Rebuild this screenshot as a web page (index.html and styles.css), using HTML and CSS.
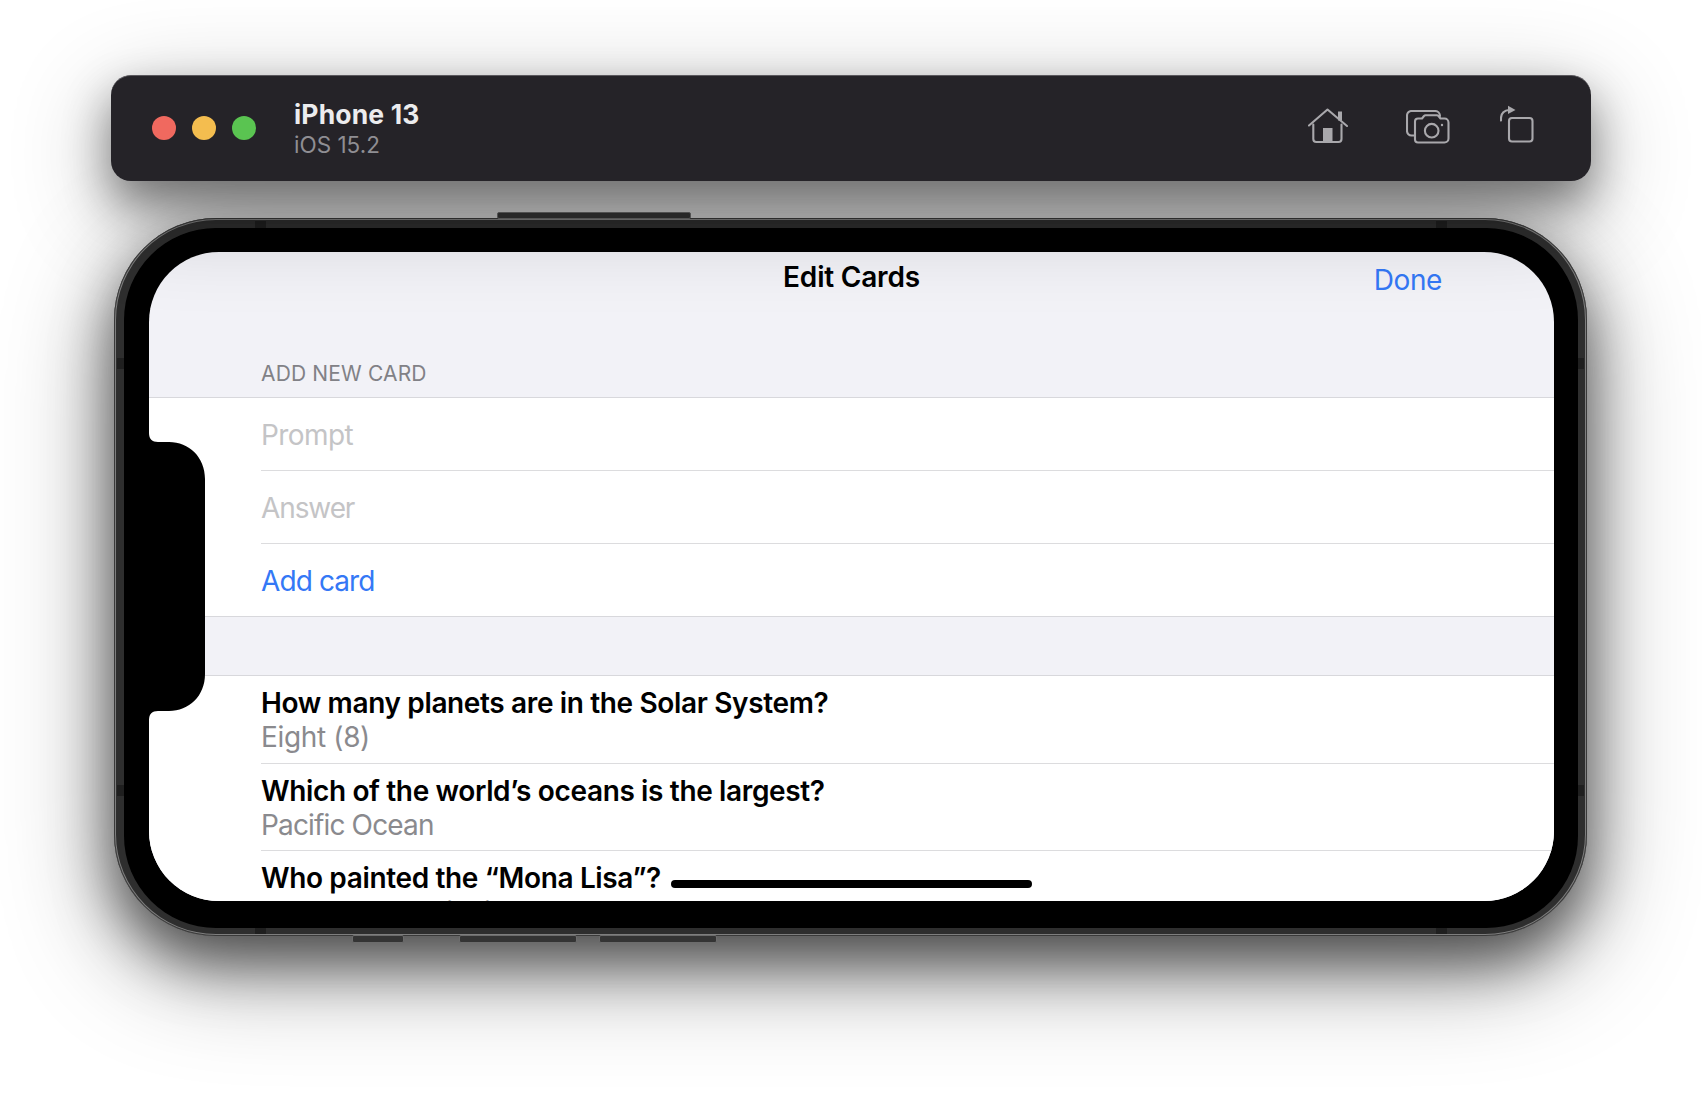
FILE: index.html
```html
<!DOCTYPE html>
<html lang="en">
<head>
<meta charset="utf-8">
<title>iPhone 13 Simulator</title>
<link rel="stylesheet" href="styles.css">
</head>
<body>
<main class="stage">
  <header class="toolbar">
    <div class="lights">
      <span class="light red"></span>
      <span class="light yellow"></span>
      <span class="light green"></span>
    </div>
    <div class="device-name">
      <div class="device-title">iPhone 13</div>
      <div class="device-os">iOS 15.2</div>
    </div>
    <div class="tools">
      <svg class="tool tool-home" viewBox="0 0 41 36">
        <path d="M1 17.500 19.500 1.500 39 18"/>
        <rect class="solid" x="30" y="3.500" width="4" height="9"/>
        <path d="M5.300 16.500V31a3 3 0 0 0 3 3H30.500a3 3 0 0 0 3-3V16.500"/>
        <rect class="solid" x="15" y="20" width="9.500" height="14"/>
      </svg>
      <svg class="tool tool-camera" viewBox="0 0 44 34">
        <path d="M8 25.500H5.500a4.500 4.500 0 0 1-4.500-4.500V5.500A4.500 4.500 0 0 1 5.500 1H29a5 5 0 0 1 5 5"/>
        <path d="M12 8.500h4l2-2.500a2 2 0 0 1 1.500-.7H31a2 2 0 0 1 1.500.7l2 2.500h4a4 4 0 0 1 4 4V28.500a4 4 0 0 1-4 4H12a3 3 0 0 1-3-3V11.500a3 3 0 0 1 3-3Z"/>
        <circle cx="25.700" cy="20.700" r="6.800"/>
        <circle class="solid" cx="36" cy="15" r="1.200"/>
      </svg>
      <svg class="tool tool-rotate" viewBox="0 0 34 38">
        <rect x="9" y="13" width="23.500" height="23.500" rx="3"/>
        <path d="M1 15.500V13a8 8 0 0 1 8-8"/>
        <path class="solid" d="M8 .8 15.500 5 8 9Z"/>
      </svg>
    </div>
  </header>

  <section class="device">
    <span class="btn btn-top"></span>
    <span class="btn btn-silent"></span>
    <span class="btn btn-up"></span>
    <span class="btn btn-down"></span>
    <span class="band band-tl"></span>
    <span class="band band-tr"></span>
    <span class="band band-bl"></span>
    <span class="band band-br"></span>
    <span class="band band-lt"></span>
    <span class="band band-lb"></span>
    <span class="band band-rt"></span>
    <span class="band band-rb"></span>
    <div class="bezel">
      <div class="screen">
        <div class="navbar">
          <span></span>
          <h1 class="nav-title">Edit Cards</h1>
          <a class="nav-done">Done</a>
        </div>
        <div class="section-label">ADD NEW CARD</div>
        <div class="group">
          <div class="row field"><span class="placeholder">Prompt</span></div>
          <div class="row field"><span class="placeholder placeholder-answer">Answer</span></div>
          <div class="row field last"><span class="action">Add card</span></div>
        </div>
        <div class="spacer"></div>
        <div class="group">
          <div class="row card">
            <div class="question">How many planets are in the Solar System?</div>
            <div class="answer answer-loose">Eight (8)</div>
          </div>
          <div class="row card">
            <div class="question">Which of the world’s oceans is the largest?</div>
            <div class="answer answer-tight">Pacific Ocean</div>
          </div>
          <div class="row card">
            <div class="question">Who painted the “Mona Lisa”?</div>
            <div class="answer">Leonardo da Vinci</div>
          </div>
        </div>
        <svg class="notch" viewBox="0 0 56 287"><path d="M0 0C0 6 3 9 9 9H20C40 9 56 24 56 46V241C56 263 40 278 20 278H9C3 278 0 281 0 287Z"/></svg>
        <span class="home-indicator"></span>
      </div>
    </div>
  </section>
</main>
</body>
</html>
```
FILE: styles.css
```css
html, body {
  margin: 0;
  padding: 0;
  background: #fff;
  font-family: Inter, "Noto Sans", "Liberation Sans", sans-serif;
}
body {
  width: 1702px;
  height: 1102px;
  overflow: hidden;
}
.stage {
  display: flex;
  flex-direction: column;
  align-items: flex-start;
  padding: 75px 0 0 111px;
}

/* Toolbar */
.toolbar {
  box-sizing: border-box;
  width: 1480px;
  height: 106px;
  display: flex;
  align-items: center;
  padding: 0 0 0 41px;
  background: #252328;
  border-radius: 20px;
  border-top: 1px solid #5a585d;
  box-shadow: 0 22px 46px rgba(0,0,0,.44), 0 26px 100px rgba(0,0,0,.3);
  position: relative;
  z-index: 1;
}
.lights { display: flex; gap: 16px; margin-bottom: 2px; }
.light { width: 24px; height: 24px; border-radius: 50%; }
.red { background: #f0695f; }
.yellow { background: #f4bd4f; }
.green { background: #5ac451; }
.device-name { margin-left: 38px; }
.device-title {
  color: #ececee;
  font-size: 26.500px;
  line-height: 30px;
  font-weight: 700;
  letter-spacing: .15px;
}
.device-os {
  color: #8f8e93;
  font-size: 22.500px;
  line-height: 29px;
  padding-top: 1px;
  letter-spacing: 0;
}
.tools {
  margin-left: auto;
  margin-bottom: 8px;
  display: flex;
  align-items: flex-start;
  padding-right: 57px;
}
.tool {
  fill: none;
  stroke: #a9a8ac;
  stroke-width: 2.100;
  stroke-linecap: round;
  stroke-linejoin: round;
  display: block;
}
.tool .solid { fill: #a9a8ac; stroke: none; }
.tool-home { width: 41px; height: 36px; margin-top: 2px; }
.tool-camera { width: 44px; height: 34px; margin-left: 57px; margin-top: 4px; }
.tool-rotate { width: 34px; height: 38px; margin-left: 50px; margin-top: -1px; }

/* Device */
.device {
  position: relative;
  box-sizing: border-box;
  width: 1473px;
  height: 718px;
  margin: 37px 0 0 3px;
  padding: 10px 9px 8px 10px;
  background: #2e2e2e;
  border-radius: 102px;
  box-shadow: inset 0 0 0 1px #3a3a3a, inset 0 0 0 2px #7e7e7e, 0 26px 56px rgba(0,0,0,.55), 0 30px 110px rgba(0,0,0,.42);
}
.btn {
  position: absolute;
  background: #343434;
  border: 1px solid #6c6c6c;
  box-sizing: border-box;
  border-radius: 2px;
}
.btn-top { left: 383px; top: -6px; width: 194px; height: 7px; }
.btn-silent { left: 238px; bottom: -7px; width: 52px; height: 8px; }
.btn-up { left: 345px; bottom: -7px; width: 118px; height: 8px; }
.btn-down { left: 485px; bottom: -7px; width: 118px; height: 8px; }
.band { position: absolute; background: #1f1f1f; }
.band-tl { left: 141px; top: 3px; width: 11px; height: 7px; }
.band-tr { right: 140px; top: 3px; width: 11px; height: 7px; }
.band-bl { left: 141px; bottom: 2px; width: 11px; height: 6px; }
.band-br { right: 140px; bottom: 2px; width: 11px; height: 6px; }
.band-lt { left: 3px; top: 140px; width: 7px; height: 11px; }
.band-lb { left: 3px; bottom: 140px; width: 7px; height: 11px; }
.band-rt { right: 3px; top: 140px; width: 6px; height: 11px; }
.band-rb { right: 3px; bottom: 140px; width: 6px; height: 11px; }

.bezel {
  height: 100%;
  box-sizing: border-box;
  padding: 24px 24px 27px 25px;
  background: #000;
  border-radius: 92px;
}
.screen {
  position: relative;
  height: 100%;
  overflow: hidden;
  background: #f2f2f7;
  border-radius: 70px;
}

/* Screen content */
.navbar {
  display: grid;
  grid-template-columns: 1fr auto 1fr;
  align-items: start;
  height: 96px;
}
.nav-title {
  margin: 8px 0 0;
  font-size: 28px;
  line-height: 34px;
  font-weight: 600;
  letter-spacing: -.2px;
  color: #000;
}
.nav-done {
  justify-self: end;
  margin: 11px 112px 0 0;
  font-size: 28px;
  line-height: 34px;
  letter-spacing: -.4px;
  color: #3478f6;
}
.section-label {
  height: 49px;
  box-sizing: border-box;
  padding: 13px 0 0 112px;
  font-size: 21px;
  line-height: 26px;
  letter-spacing: .15px;
  color: #818186;
}
.group {
  background: #fff;
  border-top: 1px solid #d8d8dc;
  border-bottom: 1px solid #d8d8dc;
}
.row {
  margin-left: 112px;
  box-sizing: border-box;
  border-bottom: 1px solid #dcdcde;
}
.field {
  height: 73px;
  display: flex;
  align-items: center;
  padding-top: 2px;
  font-size: 28px;
  letter-spacing: -.6px;
}
.field.last { border-bottom: 0; height: 72px; }
.placeholder { color: #c4c4c6; }
.placeholder-answer { letter-spacing: -1.1px; }
.action { color: #3478f6; letter-spacing: -.9px; }
.spacer { height: 58px; }
.card {
  height: 87.500px;
  padding-top: 10px;
}
.question {
  font-size: 28px;
  line-height: 34px;
  font-weight: 600;
  letter-spacing: -.36px;
  color: #000;
}
.answer {
  font-size: 28px;
  line-height: 34px;
  letter-spacing: -.6px;
  color: #8a8a8e;
}
.answer-loose { letter-spacing: -.35px; }
.answer-tight { letter-spacing: -.85px; }
.notch {
  position: absolute;
  left: 0;
  top: 181px;
  width: 56px;
  height: 287px;
  fill: #000;
}
.home-indicator {
  position: absolute;
  left: 522px;
  bottom: 13px;
  width: 361px;
  height: 8px;
  border-radius: 4px;
  background: #000;
}
```
